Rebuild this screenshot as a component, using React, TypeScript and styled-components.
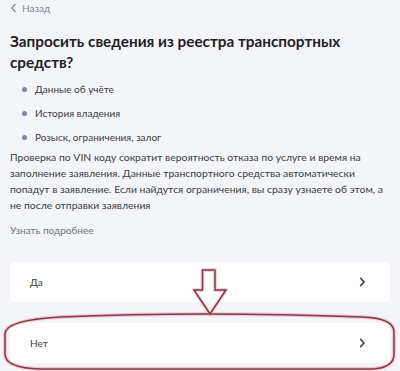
import React from 'react';
import styled, { createGlobalStyle } from 'styled-components';

const GlobalStyle = createGlobalStyle`
  html, body {
    margin: 0;
    padding: 0;
    background: #f4f5f8;
    font-family: Lato, "Noto Sans", sans-serif;
  }
`;

const Page = styled.div`
  position: relative;
  width: 400px;
  height: 371px;
  overflow: hidden;
  padding: 0 10px;
  box-sizing: border-box;
`;

const Back = styled.div`
  display: flex;
  align-items: center;
  gap: 5px;
  height: 16px;
  font-size: 10px;
  color: #7d8594;
`;

const Title = styled.h1`
  margin: 15px 0 0;
  font-size: 15.3px;
  line-height: 21px;
  font-weight: 700;
  color: #1f2024;
`;

const List = styled.ul`
  list-style: none;
  margin: 4px 0 0;
  padding: 0 0 0 12px;
`;

const Item = styled.li`
  display: flex;
  align-items: center;
  gap: 8px;
  height: 24px;
  font-size: 10px;
  color: #3a3c42;

  &::before {
    content: '';
    width: 5px;
    height: 5px;
    border-radius: 50%;
    background: #7c8a9c;
  }
`;

const Text = styled.p`
  margin: 0;
  font-size: 10.4px;
  line-height: 16px;
  color: #3a3c42;
`;

const More = styled.div`
  margin-top: 9px;
  font-size: 10px;
  line-height: 16px;
  color: #6f7480;
`;

const Options = styled.div`
  display: flex;
  flex-direction: column;
  gap: 21px;
  margin-top: 24px;
`;

const Option = styled.div`
  display: flex;
  align-items: center;
  justify-content: space-between;
  height: 40px;
  padding: 0 24px 0 20px;
  background: #ffffff;
  border-radius: 4px;
  font-size: 10px;
  color: #3a3c42;
`;

const Overlay = styled.svg`
  position: absolute;
  left: 0;
  top: 0;
  pointer-events: none;
`;

const Chevron = ({ left }: { left?: boolean }) => (
  <svg width="7" height="10" viewBox="0 0 7 10">
    <path
      d={left ? 'M5 1.5 L1.8 5 L5 8.5' : 'M1.8 1.5 L5 5 L1.8 8.5'}
      fill="none"
      stroke={left ? '#7d8594' : '#3e4a5c'}
      strokeWidth={left ? 1.3 : 1.8}
      strokeLinecap="round"
      strokeLinejoin="round"
    />
  </svg>
);

const ring = 'M60 317 Q200 311 362 317 Q394 318 394 332 L394 354 Q394 368 372 369 L40 369 Q5 368 5 354 L5 334 Q5 320 60 317 Z';
const arrow = 'M202.5 270 L215 270 L215 290 L226 290 L210 314 L194 290 L202.5 290 Z';

export default function App() {
  return (
    <>
      <GlobalStyle />
      <Page>
        <Back>
          <Chevron left />
          Назад
        </Back>
        <Title>Запросить сведения из реестра транспортных средств?</Title>
        <List>
          <Item>Данные об учёте</Item>
          <Item>История владения</Item>
          <Item>Розыск, ограничения, залог</Item>
        </List>
        <Text>
          Проверка по VIN коду сократит вероятность отказа по услуге и время на заполнение
          заявления. Данные транспортного средства автоматически попадут в заявление. Если
          найдутся ограничения, вы сразу узнаете об этом, а не после отправки заявления
        </Text>
        <More>Узнать подробнее</More>
        <Options>
          <Option>
            Да
            <Chevron />
          </Option>
          <Option>
            Нет
            <Chevron />
          </Option>
        </Options>
        <Overlay width="400" height="371" viewBox="0 0 400 371">
          <path d={ring} fill="none" stroke="rgba(235,120,140,0.35)" strokeWidth="4" />
          <path d={ring} fill="none" stroke="#873846" strokeWidth="1.5" />
          <path d={arrow} fill="none" stroke="rgba(235,120,140,0.35)" strokeWidth="4" strokeLinejoin="round" />
          <path d={arrow} fill="none" stroke="#7a3a48" strokeWidth="1.5" strokeLinejoin="miter" />
        </Overlay>
      </Page>
    </>
  );
}
